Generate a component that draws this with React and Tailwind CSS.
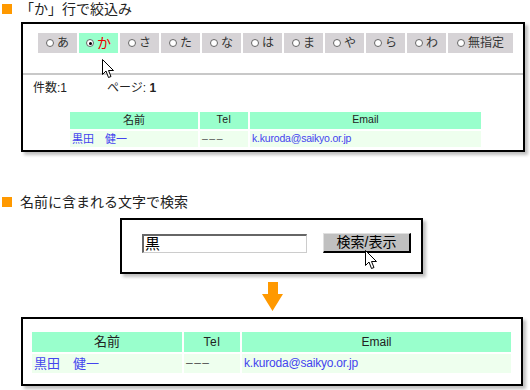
import React from "react";

const jp = { fontFamily: '"Liberation Sans", "Noto Sans CJK JP", sans-serif' };

const kana = ["あ", "か", "さ", "た", "な", "は", "ま", "や", "ら", "わ"];

const Pointer = ({ className }) => (
    <svg className={className} width="13" height="20" viewBox="0 0 13 20">
        <path
            d="M0.5 0.5 L0.5 15.5 L4 12 L6.5 18.5 L9 17.5 L6.5 11.5 L11.5 11.5 Z"
            fill="#fff"
            stroke="#000"
            strokeWidth="1"
            strokeLinejoin="miter"
        />
    </svg>
);

const Heading = ({ children }) => (
    <div className="flex items-center h-[18px]">
        <span className="w-[10px] h-[10px] bg-[#ff9900] ml-[2px] mr-[8px]"></span>
        <span className="text-[14px] text-[#222] leading-[18px]">{children}</span>
    </div>
);

const ResultTable = ({ widths, rowH, headH, latin }) => (
    <table className="border-separate border-spacing-[2px] -m-[2px]">
        <thead>
            <tr className={`${headH} bg-[#99ffcc] text-[#222]`}>
                <th className={`${widths[0]} font-normal p-0`}>名前</th>
                <th className={`${widths[1]} font-normal p-0 ${latin} tracking-[0.5px]`}>Tel</th>
                <th className={`${widths[2]} font-normal p-0 ${latin}`}>Email</th>
            </tr>
        </thead>
        <tbody>
            <tr className={`${rowH} bg-[#eeffee] text-[#4444ee]`}>
                <td className="p-0 pl-[2px]">黒田　健一</td>
                <td className={`p-0 pl-[2px] text-[#555] ${latin} tracking-[1.5px]`}>–––</td>
                <td className={`p-0 pl-[2px] ${latin} tracking-[-0.2px]`}>k.kuroda@saikyo.or.jp</td>
            </tr>
        </tbody>
    </table>
);

const App = () => {
    return (
        <div className="w-[530px] h-[390px] bg-white relative overflow-hidden" style={jp}>
            <Heading>「か」行で絞込み</Heading>

            {/* panel 1 */}
            <div className="relative ml-[21px] mt-[4px] w-[504px] h-[130px] border-2 border-black shadow-[3px_3px_3px_rgba(0,0,0,0.25)] bg-white">
                <div className="flex gap-[2px] ml-[15px] mt-[9px]">
                    {kana.map((k, i) => (
                        <div
                            key={k}
                            className={`w-[39px] h-[20px] flex items-center justify-center gap-[3px] text-[12px] ${i === 1 ? "bg-[#99ffcc]" : "bg-[#d6d3d6]"}`}
                        >
                            <span className="w-[8px] h-[8px] rounded-full border border-[#666] bg-white flex items-center justify-center">
                                {i === 1 ? <span className="w-[3px] h-[3px] rounded-full bg-black"></span> : null}
                            </span>
                            <span className={i === 1 ? "text-[#ee0000] text-[14px]" : "text-[#333]"}>{k}</span>
                        </div>
                    ))}
                    <div className="w-[65px] h-[20px] flex items-center justify-center gap-[3px] text-[12px] bg-[#d6d3d6] text-[#333]">
                        <span className="w-[8px] h-[8px] rounded-full border border-[#666] bg-white"></span>
                        <span>無指定</span>
                    </div>
                </div>
                <Pointer className="absolute left-[79px] top-[35px]" />
                <div className="mt-[20px] h-[2px] bg-[#c8c8c8]"></div>
                <div className="flex text-[12px] text-[#222] mt-[4px] h-[17px] items-center">
                    <span className="ml-[10px] w-[74px]">件数:1</span>
                    <span>ページ: <b>1</b></span>
                </div>
                <div className="ml-[47px] mt-[16px] text-[11px]">
                    <ResultTable
                        widths={["w-[128px]", "w-[48px]", "w-[231px]"]}
                        headH="h-[16px]"
                        rowH="h-[16px]"
                        latin="text-[10.5px]"
                    />
                </div>
            </div>

            <div className="mt-[41px]">
                <Heading>名前に含まれる文字で検索</Heading>
            </div>

            {/* panel 2 */}
            <div className="relative ml-[120px] mt-[7px] w-[303px] h-[56px] border-2 border-black shadow-[3px_3px_3px_rgba(0,0,0,0.25)] bg-white flex items-start">
                <div className="ml-[20px] mt-[14px] w-[165px] h-[19px] border-t-2 border-l-2 border-b border-r border-t-[#666] border-l-[#666] border-b-[#ccc] border-r-[#ccc] text-[15px] leading-[16px] pl-[1px] text-black">
                    黒
                </div>
                <div className="ml-[16px] mt-[13px] w-[88px] h-[20px] bg-[#c0c0c0] border-t border-l border-b-2 border-r-2 border-t-[#e0e0e0] border-l-[#e0e0e0] border-b-black border-r-black flex items-center justify-center text-[14px] text-black">
                    検索/表示
                </div>
                <Pointer className="absolute left-[243px] top-[30px]" />
            </div>

            {/* arrow */}
            <div className="ml-[262px] mt-[8px] w-[21px] h-[29px]">
                <svg width="21" height="29" viewBox="0 0 21 29">
                    <path d="M6 0 H16 V12 H21 L10.5 29 L0 12 H6 Z" fill="#ff9900" />
                </svg>
            </div>

            {/* panel 3 */}
            <div className="ml-[21px] mt-[6px] w-[502px] h-[69px] border-2 border-black shadow-[3px_3px_3px_rgba(0,0,0,0.25)] bg-white">
                <div className="ml-[9px] mt-[13px] text-[13px]">
                    <ResultTable
                        widths={["w-[150px]", "w-[56px]", "w-[269px]"]}
                        headH="h-[17px]"
                        rowH="h-[18px]"
                        latin="text-[12px]"
                    />
                </div>
            </div>
        </div>
    );
};

export default App;
